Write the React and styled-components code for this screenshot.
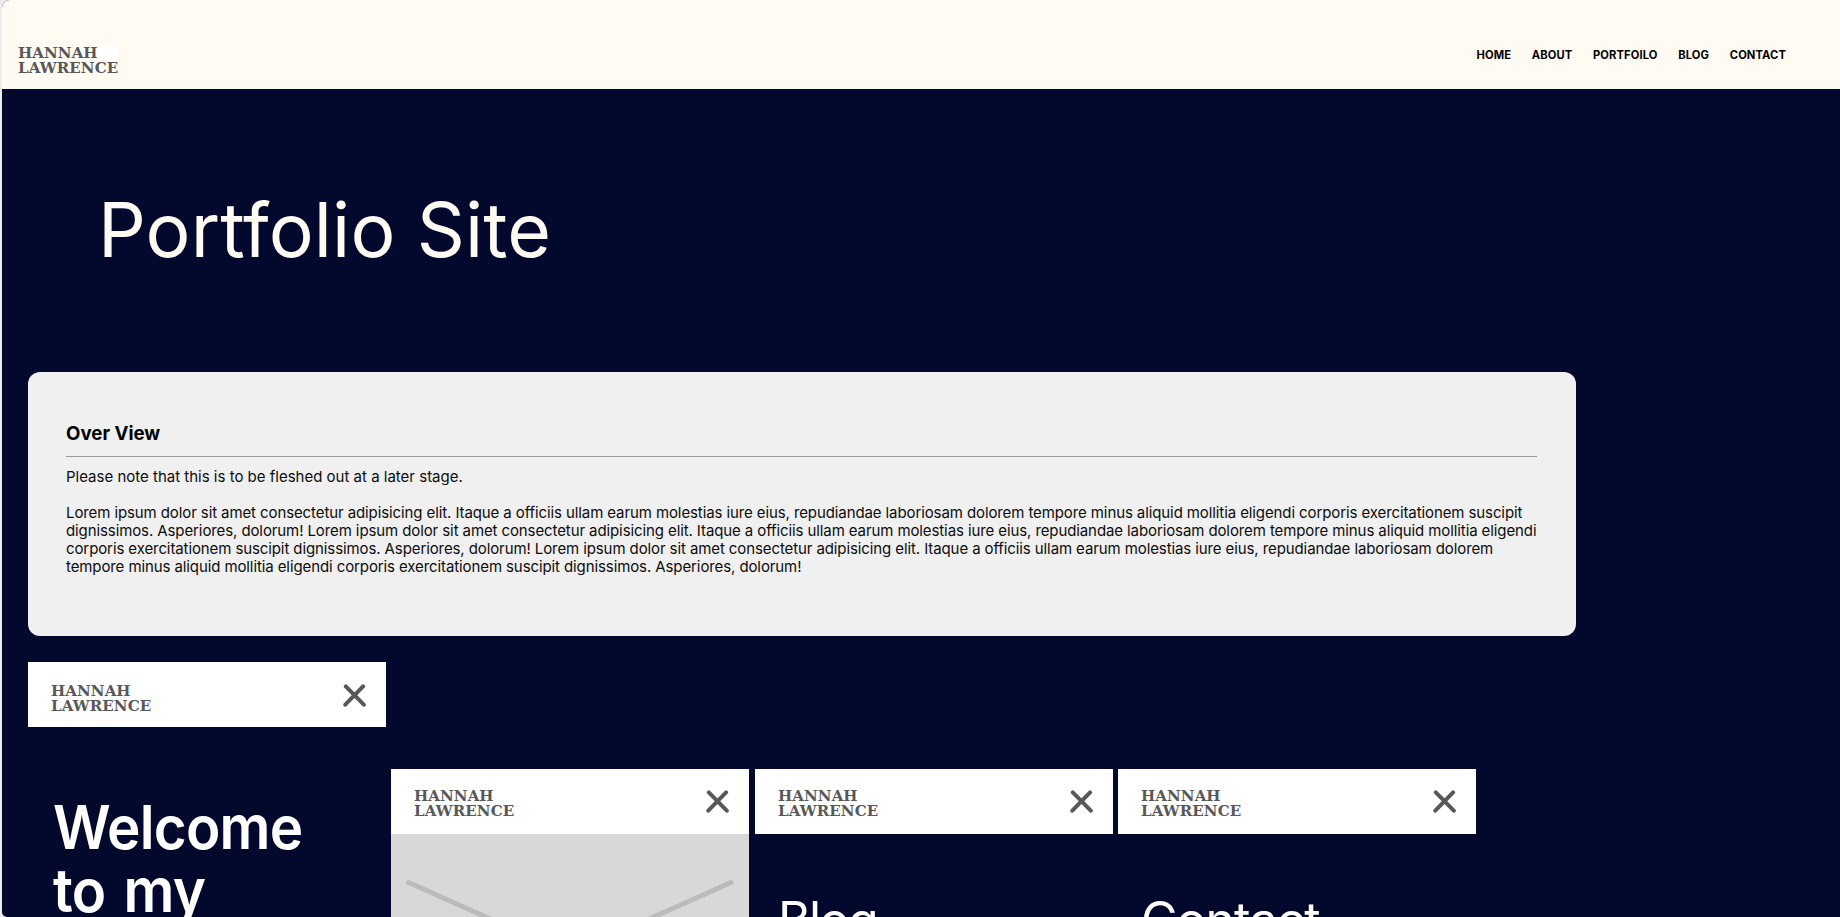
import React from "react";
import styled, { createGlobalStyle } from "styled-components";

const Global = createGlobalStyle`
  *, *::before, *::after { box-sizing: border-box; }
  html, body { margin: 0; padding: 0; height: 917px; overflow: hidden; background: #ececee; }
  body { font-family: Inter, "Liberation Sans", sans-serif; color: #000; }
`;

const Page = styled.div`
  margin-left: 2px;
  height: 917px;
  overflow: hidden;
  border-radius: 8px 0 0 5px;
  background: #03092d;
`;

const Header = styled.header`
  display: flex;
  justify-content: space-between;
  height: 89px;
  padding: 46px 54px 0 16px;
  background: #fffbf3;
`;

const LogoBox = styled.div`
  width: 100px;
  height: 27px;
  padding-top: ${(p) => (p.$plate ? 1 : 0)}px;
  background: ${(p) => (p.$plate ? "linear-gradient(#fff, #fff) 80px 0 / 20px 15px no-repeat" : "none")};
`;

const LogoLine = styled.div`
  height: 15px;
  line-height: 13px;
  font-family: "DejaVu Serif", serif;
  font-weight: 700;
  font-size: 15px;
  letter-spacing: ${(p) => p.$spacing}px;
  color: #58585a;
  white-space: nowrap;
`;

const Nav = styled.nav`
  display: flex;
  gap: 20.7px;
  padding-top: 2px;
`;

const NavLink = styled.a`
  font-size: 11.2px;
  line-height: 14px;
  font-weight: 700;
  letter-spacing: 0.1px;
  color: #000;
`;

const Title = styled.h1`
  margin: 0;
  height: 283px;
  padding: 95px 0 0 96px;
  font-size: 75px;
  line-height: 91px;
  font-weight: 400;
  letter-spacing: 0.12px;
  color: #fffbf3;
`;

const Overview = styled.section`
  width: 1548px;
  height: 264px;
  margin-left: 26px;
  padding: 50px 39px 0 38px;
  border-radius: 12px;
  background: #f0f0f0;
`;

const Heading = styled.h3`
  margin: 0;
  font-size: 18.7px;
  line-height: 23px;
  font-weight: 700;
`;

const Rule = styled.hr`
  margin: 11px 0;
  border: 0;
  height: 1px;
  background: #999;
`;

const Copy = styled.p`
  margin: 0 0 18px;
  font-size: 15px;
  line-height: 18px;
  font-weight: 400;
  letter-spacing: ${(p) => p.$spacing || 0}px;
  color: #0c0c0c;
  white-space: nowrap;
`;

const Gallery = styled.div`
  display: flex;
  align-items: flex-start;
  padding: 26px 0 0 26px;
`;

const Phone = styled.article`
  flex: none;
  width: 358px;
  height: 400px;
  margin: ${(p) => p.$top}px ${(p) => p.$gap}px 0 0;
  background: ${(p) => (p.$placeholder ? "#d8d8d8" : "transparent")};
`;

const PhoneBar = styled.div`
  display: flex;
  justify-content: space-between;
  height: 65px;
  padding: ${(p) => p.$inset}px 20px 0 23px;
  background: #fff;
`;

const Close = styled.svg`
  display: block;
  width: 23px;
  height: 23px;
  margin-top: ${(p) => p.$shift}px;
`;

const Welcome = styled.h2`
  margin: 0;
  padding: 69px 0 0 25px;
  font-size: 60px;
  line-height: 63.4px;
  font-weight: 600;
  letter-spacing: -0.8px;
  word-spacing: 5px;
  color: #fff;
  transform: scaleX(0.942);
  transform-origin: 25px 0;
`;

const Section = styled.h2`
  margin: 0;
  padding: 56px 0 0 23px;
  font-size: 50px;
  line-height: 60px;
  font-weight: 400;
  letter-spacing: ${(p) => p.$spacing}px;
  color: #fff;
`;

const Crossed = styled.svg`
  display: block;
  width: 358px;
  height: 335px;
`;

function Logo({ plate }) {
  return (
    <LogoBox $plate={plate}>
      <LogoLine $spacing={0.1}>HANNAH</LogoLine>
      <LogoLine $spacing={0.13}>LAWRENCE</LogoLine>
    </LogoBox>
  );
}

function Bar({ inset, shift = 0 }) {
  return (
    <PhoneBar $inset={inset}>
      <Logo />
      <Close $shift={shift} viewBox="0 0 23 23" fill="none" stroke="#58585a" strokeWidth="4" strokeLinecap="round">
        <path d="M2.8 2.4 20.8 20.7M20.1 2.4 2.3 20.7" />
      </Close>
    </PhoneBar>
  );
}

const links = ["HOME", "ABOUT", "PORTFOILO", "BLOG", "CONTACT"];

export default function App() {
  return (
    <>
      <Global />
      <Page>
        <Header>
          <Logo plate />
          <Nav>{links.map((l) => <NavLink key={l}>{l}</NavLink>)}</Nav>
        </Header>
        <Title>Portfolio Site</Title>
        <Overview>
          <Heading>Over View</Heading>
          <Rule />
          <Copy>Please note that this is to be fleshed out at a later stage.</Copy>
          <Copy $spacing={-0.1}>
            Lorem ipsum dolor sit amet consectetur adipisicing elit. Itaque a officiis ullam earum molestias iure eius, repudiandae laboriosam dolorem tempore minus aliquid mollitia eligendi corporis exercitationem suscipit<br />
            dignissimos. Asperiores, dolorum! Lorem ipsum dolor sit amet consectetur adipisicing elit. Itaque a officiis ullam earum molestias iure eius, repudiandae laboriosam dolorem tempore minus aliquid mollitia eligendi<br />
            corporis exercitationem suscipit dignissimos. Asperiores, dolorum! Lorem ipsum dolor sit amet consectetur adipisicing elit. Itaque a officiis ullam earum molestias iure eius, repudiandae laboriosam dolorem<br />
            tempore minus aliquid mollitia eligendi corporis exercitationem suscipit dignissimos. Asperiores, dolorum!
          </Copy>
        </Overview>
        <Gallery>
          <Phone $top={0} $gap={5}>
            <Bar inset={23} shift={-1} />
            <Welcome>Welcome<br />to my</Welcome>
          </Phone>
          <Phone $top={107} $gap={6} $placeholder>
            <Bar inset={21} />
            <Crossed viewBox="0 0 358 335" fill="none" stroke="#bbb" strokeWidth="5" strokeLinecap="round">
              <path d="M17.5 48.5 340 192M340 48.5 17.5 192" />
            </Crossed>
          </Phone>
          <Phone $top={107} $gap={5}>
            <Bar inset={21} />
            <Section $spacing={-1.6}>Blog</Section>
          </Phone>
          <Phone $top={107} $gap={0}>
            <Bar inset={21} />
            <Section $spacing={-1}>Contact</Section>
          </Phone>
        </Gallery>
      </Page>
    </>
  );
}
